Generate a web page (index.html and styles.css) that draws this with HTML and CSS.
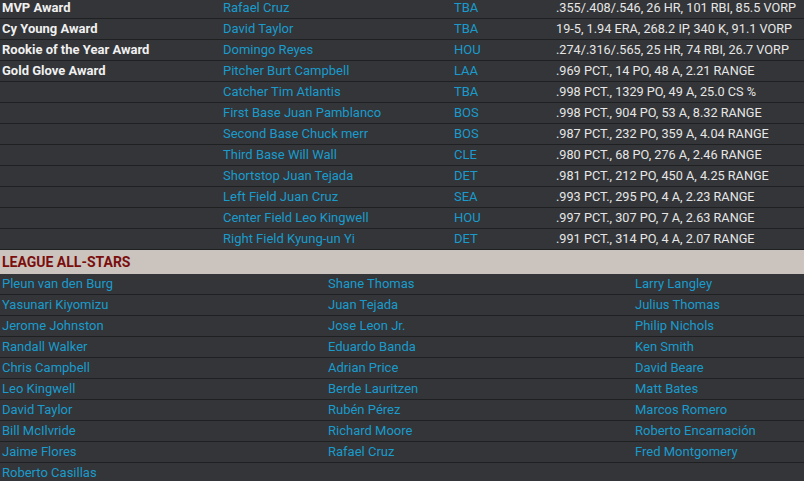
FILE: index.html
```html
<!DOCTYPE html>
<html lang="en">
<head>
  <meta charset="UTF-8">
  <title>League Awards</title>
  <link rel="stylesheet" href="styles.css">
</head>
<body>

<table class="awards">
  <tr><td class="award">MVP Award</td><td><a href="#">Rafael Cruz</a></td><td><a href="#">TBA</a></td><td class="stats">.355/.408/.546, 26 HR, 101 RBI, 85.5 VORP</td></tr>
  <tr><td class="award">Cy Young Award</td><td><a href="#">David Taylor</a></td><td><a href="#">TBA</a></td><td class="stats">19-5, 1.94 ERA, 268.2 IP, 340 K, 91.1 VORP</td></tr>
  <tr><td class="award">Rookie of the Year Award</td><td><a href="#">Domingo Reyes</a></td><td><a href="#">HOU</a></td><td class="stats">.274/.316/.565, 25 HR, 74 RBI, 26.7 VORP</td></tr>
  <tr><td class="award">Gold Glove Award</td><td><a href="#">Pitcher Burt Campbell</a></td><td><a href="#">LAA</a></td><td class="stats">.969 PCT., 14 PO, 48 A, 2.21 RANGE</td></tr>
  <tr><td class="award"></td><td><a href="#">Catcher Tim Atlantis</a></td><td><a href="#">TBA</a></td><td class="stats">.998 PCT., 1329 PO, 49 A, 25.0 CS %</td></tr>
  <tr><td class="award"></td><td><a href="#">First Base Juan Pamblanco</a></td><td><a href="#">BOS</a></td><td class="stats">.998 PCT., 904 PO, 53 A, 8.32 RANGE</td></tr>
  <tr><td class="award"></td><td><a href="#">Second Base Chuck merr</a></td><td><a href="#">BOS</a></td><td class="stats">.987 PCT., 232 PO, 359 A, 4.04 RANGE</td></tr>
  <tr><td class="award"></td><td><a href="#">Third Base Will Wall</a></td><td><a href="#">CLE</a></td><td class="stats">.980 PCT., 68 PO, 276 A, 2.46 RANGE</td></tr>
  <tr><td class="award"></td><td><a href="#">Shortstop Juan Tejada</a></td><td><a href="#">DET</a></td><td class="stats">.981 PCT., 212 PO, 450 A, 4.25 RANGE</td></tr>
  <tr><td class="award"></td><td><a href="#">Left Field Juan Cruz</a></td><td><a href="#">SEA</a></td><td class="stats">.993 PCT., 295 PO, 4 A, 2.23 RANGE</td></tr>
  <tr><td class="award"></td><td><a href="#">Center Field Leo Kingwell</a></td><td><a href="#">HOU</a></td><td class="stats">.997 PCT., 307 PO, 7 A, 2.63 RANGE</td></tr>
  <tr><td class="award"></td><td><a href="#">Right Field Kyung-un Yi</a></td><td><a href="#">DET</a></td><td class="stats">.991 PCT., 314 PO, 4 A, 2.07 RANGE</td></tr>
</table>

<div class="section-title">LEAGUE ALL-STARS</div>

<div class="allstars">
  <a href="#">Pleun van den Burg</a><a href="#">Shane Thomas</a><a href="#">Larry Langley</a>
  <a href="#">Yasunari Kiyomizu</a><a href="#">Juan Tejada</a><a href="#">Julius Thomas</a>
  <a href="#">Jerome Johnston</a><a href="#">Jose Leon Jr.</a><a href="#">Philip Nichols</a>
  <a href="#">Randall Walker</a><a href="#">Eduardo Banda</a><a href="#">Ken Smith</a>
  <a href="#">Chris Campbell</a><a href="#">Adrian Price</a><a href="#">David Beare</a>
  <a href="#">Leo Kingwell</a><a href="#">Berde Lauritzen</a><a href="#">Matt Bates</a>
  <a href="#">David Taylor</a><a href="#">Rubén Pérez</a><a href="#">Marcos Romero</a>
  <a href="#">Bill McIlvride</a><a href="#">Richard Moore</a><a href="#">Roberto Encarnación</a>
  <a href="#">Jaime Flores</a><a href="#">Rafael Cruz</a><a href="#">Fred Montgomery</a>
  <a href="#">Roberto Casillas</a><span></span><span></span>
</div>

</body>
</html>
```

FILE: styles.css
```css
body {
  margin: 0;
  background-color: #333538;
  font-family: Roboto, 'Liberation Sans', sans-serif;
  font-size: 13px;
  color: #e6e6e6;
  overflow: hidden;
}

a {
  color: #1a9bcc;
  text-decoration: none;
}

.awards {
  width: 100%;
  border-collapse: collapse;
  margin-top: -2px;
}

.awards td {
  height: 19px;
  padding: 0 2px 1px;
  border-bottom: 1px solid #1f2022;
  white-space: nowrap;
}

.awards td:nth-child(1) { width: 217px; }
.awards td:nth-child(2) { width: 227px; }
.awards td:nth-child(3) { width: 98px; }

.award {
  font-weight: bold;
  color: #f0f0f0;
}

.awards .stats {
  font-size: 12.7px;
  color: #e6e6e6;
}

.section-title {
  height: 24px;
  line-height: 24px;
  padding: 0 2px;
  background-color: #cbc4be;
  color: #7a0d0d;
  font-weight: bold;
  font-size: 14px;
}

.allstars {
  display: grid;
  grid-template-columns: 326px 307px 1fr;
}

.allstars a,
.allstars span {
  height: 20px;
  line-height: 20px;
  padding: 0 2px;
  border-bottom: 1px solid #1f2022;
  white-space: nowrap;
}

.allstars span {
  border-bottom: none;
}
```
